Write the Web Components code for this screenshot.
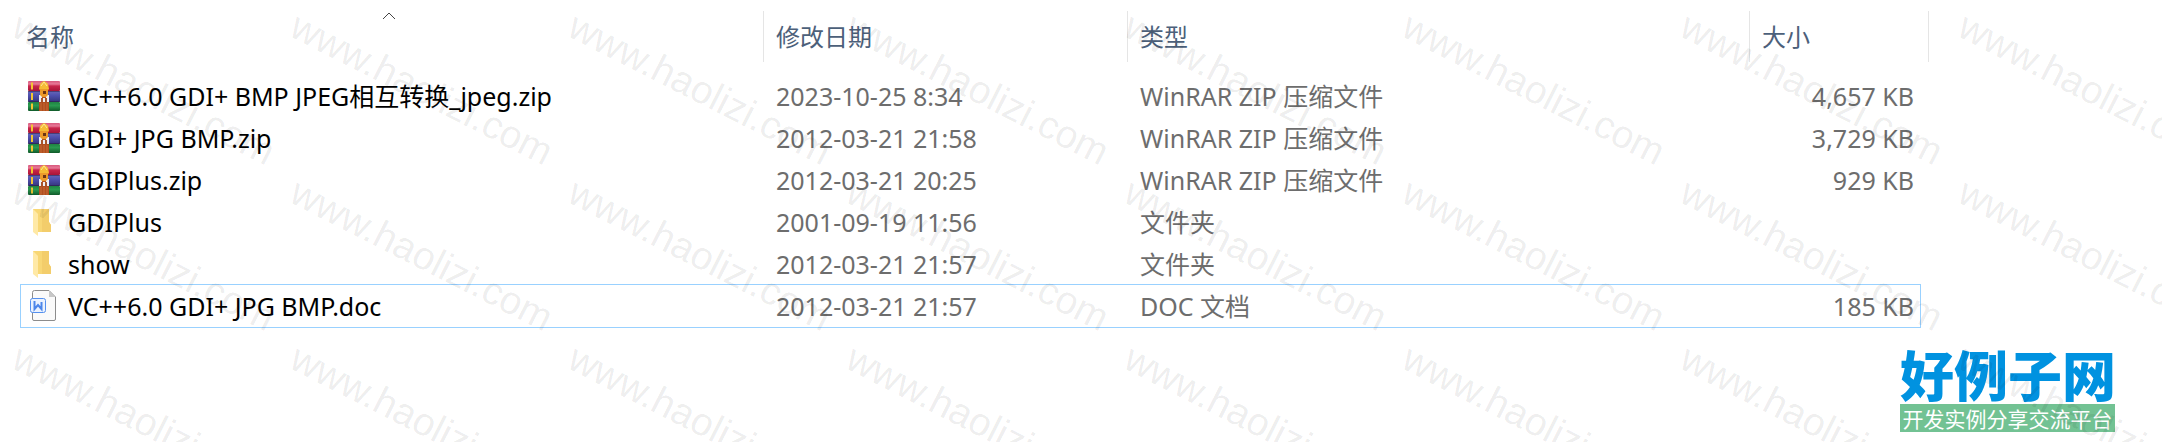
<!DOCTYPE html>
<html lang="zh-CN">
<head>
<meta charset="utf-8">
<title>文件列表</title>
<style>
  body {
    margin: 0;
    background: #fff;
    font-family: "Noto Sans", "Noto Sans CJK SC", sans-serif;
  }
</style>
</head>
<body>
<file-explorer>
  <file-list></file-list>
  <site-logo slot="overlay" name="好例子网" slogan="开发实例分享交流平台"></site-logo>
  <water-mark slot="overlay" text="www.haolizi.com" count="24"></water-mark>
</file-explorer>

<script>
const ICONS = {
  zip: `
    <svg viewBox="0 0 32 30" width="32" height="30">
      <defs>
        <linearGradient id="r" x2="0" y2="1"><stop offset="0" stop-color="#d8587c"/><stop offset=".3" stop-color="#e77a98"/><stop offset=".5" stop-color="#c8264c"/><stop offset="1" stop-color="#a81438"/></linearGradient>
        <linearGradient id="b" x2="0" y2="1"><stop offset="0" stop-color="#6668b8"/><stop offset=".4" stop-color="#4f50ae"/><stop offset="1" stop-color="#34357c"/></linearGradient>
        <linearGradient id="g" x2="0" y2="1"><stop offset="0" stop-color="#1f8442"/><stop offset=".4" stop-color="#2a9a50"/><stop offset="1" stop-color="#105a2a"/></linearGradient>
      </defs>
      <rect width="32" height="10" rx="1" fill="url(#r)"/>
      <rect y="10" width="32" height="11" rx="1" fill="url(#b)"/>
      <rect y="21" width="32" height="9" rx="1" fill="url(#g)"/>
      <path d="M0 10.500h32M0 20.500h32" stroke="#2a1a3a" stroke-opacity=".5"/>
      <path d="M4 1.500v7M4 12v7M4 22.500v6" stroke="#f2c531" stroke-width="2"/>
      <path d="M11 20h10v10H11z" fill="#b04e20"/>
      <path d="M13 22v8M16 22v8M19 22v8" stroke="#c86a34"/>
      <path d="M11 14h10v7H11z" fill="#eef0f4"/>
      <path d="M14 14h4v3h-4z" fill="#b8561f"/>
      <path d="M13 17h2v4h-2zM17 17h2v4h-2z" fill="#a8552c"/>
      <path d="M11 8l1-5 2-2 2-1 2 1 2 2 1 5-1 1h-8z" fill="#f5bb35"/>
      <path d="M13 5l3-4 3 4" fill="none" stroke="#fde69a"/>
      <path d="M12 8h8v6l-2 2h-4l-2-2z" fill="#ec9a2a"/>
      <path d="M15 10h3v3h-3z" fill="#6c3414"/>
    </svg>`,
  folder: `
    <svg viewBox="0 0 32 30" width="32" height="30">
      <path d="M5 2h16v13l2 3v7H10L5 21z" fill="#f8d775"/>
      <path d="M14 2h7v13l2 3v7h-9z" fill="#f3cd6b"/>
      <path d="M5 2l5 5v22l-5-4z" fill="#ffe9a6"/>
    </svg>`,
  doc: `
    <svg viewBox="0 0 32 32" width="32" height="32">
      <path d="M6.500.500H21l6.500 6.500V29a1.500 1.500 0 0 1-1.500 1.500H6A1.500 1.500 0 0 1 4.500 29V2.500a2 2 0 0 1 2-2z" fill="#fafafa" stroke="#8c8c8c"/>
      <path d="M21 1v6h6z" fill="#c8c8c8"/>
      <rect x="2.500" y="8.500" width="15" height="14" rx="2" fill="#eaf2ff" stroke="#5590ee"/>
      <path d="M6.500 11v8l3.500-4 3.500 4v-7" fill="none" stroke="#4c86ea" stroke-width="2"/>
    </svg>`
};

const FILES = [
  { icon: 'zip', name: 'VC++6.0 GDI+ BMP JPEG相互转换_jpeg.zip', date: '2023-10-25 8:34', type: 'WinRAR ZIP 压缩文件', size: '4,657 KB' },
  { icon: 'zip', name: 'GDI+ JPG BMP.zip', date: '2012-03-21 21:58', type: 'WinRAR ZIP 压缩文件', size: '3,729 KB' },
  { icon: 'zip', name: 'GDIPlus.zip', date: '2012-03-21 20:25', type: 'WinRAR ZIP 压缩文件', size: '929 KB' },
  { icon: 'folder', name: 'GDIPlus', date: '2001-09-19 11:56', type: '文件夹', size: '' },
  { icon: 'folder', name: 'show', date: '2012-03-21 21:57', type: '文件夹', size: '' },
  { icon: 'doc', name: 'VC++6.0 GDI+ JPG BMP.doc', date: '2012-03-21 21:57', type: 'DOC 文档', size: '185 KB', focused: true }
];

class FileExplorer extends HTMLElement {
  constructor() {
    super();
    this.attachShadow({ mode: 'open' });
    this.shadowRoot.innerHTML = `
      <style>
        :host {
          display: block;
          position: relative;
          box-sizing: border-box;
          min-height: 100vh;
          padding: 11px 242px 0 21px;
          overflow: hidden;
        }
      </style>
      <slot></slot>
      <slot name="overlay"></slot>
    `;
  }
}

class FileIcon extends HTMLElement {
  constructor() {
    super();
    this.attachShadow({ mode: 'open' });
  }

  connectedCallback() {
    this.shadowRoot.innerHTML = `
      <style>
        :host {
          display: block;
          flex: none;
          width: 32px;
        }
        svg {
          display: block;
        }
      </style>
      ${ICONS[this.getAttribute('type')]}
    `;
  }
}

class FileList extends HTMLElement {
  constructor() {
    super();
    this.attachShadow({ mode: 'open' });
  }

  connectedCallback() {
    this.render();
  }

  render() {
    this.shadowRoot.innerHTML = `
      <style>
        :host {
          display: block;
        }
        table {
          width: 100%;
          table-layout: fixed;
          border-collapse: separate;
          border-spacing: 0;
        }
        .date { width: 364px; }
        .type { width: 622px; }
        .size { width: 170px; }
        th {
          position: relative;
          height: 51px;
          padding: 0 0 13px;
          text-align: left;
        }
        th::after {
          content: "";
          position: absolute;
          top: 0;
          right: 0;
          width: 1px;
          height: 51px;
          background: #e5e5e5;
        }
        th:last-child::after {
          right: -9px;
        }
        button {
          display: block;
          width: 100%;
          height: 51px;
          padding: 0 0 0 12px;
          border: 0;
          background: none;
          color: #4c607a;
          font: inherit;
          font-weight: 400;
          font-size: 24px;
          line-height: 32px;
          text-align: left;
        }
        th:first-child button {
          padding-left: 5px;
        }
        .arrow {
          position: absolute;
          top: 0;
          left: 0;
          right: 8px;
          margin: 0 auto;
        }
        td {
          height: 42px;
          padding: 0 0 0 12px;
          color: #6d6d6d;
          font-size: 25px;
          line-height: 32px;
          white-space: nowrap;
        }
        td:first-child {
          padding-left: 7px;
          color: #000;
        }
        td:last-child {
          padding: 0 6px 0 0;
          text-align: right;
        }
        .name {
          display: flex;
          align-items: center;
          gap: 8px;
        }
        .focused {
          outline: 1px solid #99d1ff;
        }
      </style>
      <table>
        <colgroup><col><col class="date"><col class="type"><col class="size"></colgroup>
        <thead>
          <tr>
            <th aria-sort="ascending">
              <button>名称</button>
              <svg class="arrow" width="14" height="9" viewBox="0 0 14 9"><path d="M1 8l6-6 6 6" fill="none" stroke="#444"/></svg>
            </th>
            <th><button>修改日期</button></th>
            <th><button>类型</button></th>
            <th><button>大小</button></th>
          </tr>
        </thead>
        <tbody>
          ${FILES.map((f) => `
          <tr class="${f.focused ? 'focused' : ''}">
            <td><div class="name"><file-icon type="${f.icon}"></file-icon><div>${f.name}</div></div></td>
            <td>${f.date}</td>
            <td>${f.type}</td>
            <td>${f.size}</td>
          </tr>`).join('')}
        </tbody>
      </table>
    `;
  }
}

class SiteLogo extends HTMLElement {
  constructor() {
    super();
    this.attachShadow({ mode: 'open' });
  }

  connectedCallback() {
    this.shadowRoot.innerHTML = `
      <style>
        :host {
          display: block;
          position: absolute;
          right: 47px;
          bottom: 10px;
          width: 215px;
          font-family: "Noto Sans CJK SC", sans-serif;
          text-align: center;
          white-space: nowrap;
        }
        .title {
          color: #0092e0;
          font-size: 54px;
          font-weight: 900;
          line-height: 60px;
        }
        .slogan {
          background: #72c293;
          color: #fff;
          font-size: 21px;
          line-height: 28px;
        }
      </style>
      <div class="title">${this.getAttribute('name')}</div>
      <div class="slogan">${this.getAttribute('slogan')}</div>
    `;
  }
}

class WaterMark extends HTMLElement {
  constructor() {
    super();
    this.attachShadow({ mode: 'open' });
  }

  connectedCallback() {
    const text = this.getAttribute('text');
    const count = Number(this.getAttribute('count'));

    this.shadowRoot.innerHTML = `
      <style>
        :host {
          position: absolute;
          inset: 0;
          display: grid;
          grid-template-columns: repeat(8, 278px);
          grid-auto-rows: 166px;
          align-content: start;
          padding: 2px 0 0 9px;
          overflow: hidden;
          pointer-events: none;
          color: rgba(0, 0, 0, 0.08);
          font: 39px/40px "Liberation Sans", sans-serif;
        }
        /* turned about the start of the baseline */
        span {
          justify-self: start;
          align-self: start;
          transform: rotate(27deg);
          transform-origin: 0 34px;
          white-space: nowrap;
        }
      </style>
      ${`<span>${text}</span>`.repeat(count)}
    `;
  }
}

customElements.define('file-explorer', FileExplorer);
customElements.define('file-icon', FileIcon);
customElements.define('file-list', FileList);
customElements.define('site-logo', SiteLogo);
customElements.define('water-mark', WaterMark);
</script>
</body>
</html>
